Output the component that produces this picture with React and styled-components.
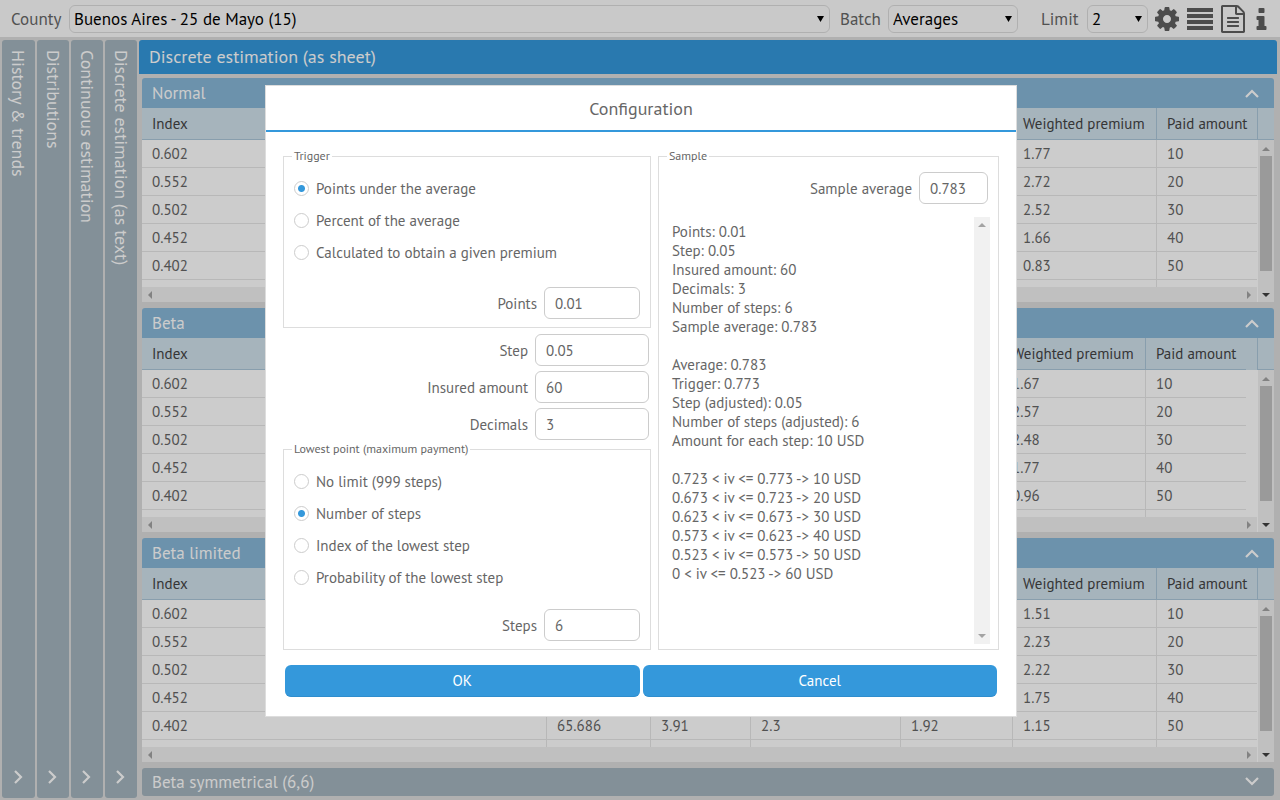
import React, { useState } from "react";
import styled, { createGlobalStyle, css } from "styled-components";

const GlobalStyle = createGlobalStyle`
  * {
    box-sizing: border-box;
  }
  body {
    margin: 0;
    background: #dddddd;
    color: #666666;
    font-family: "PT Sans", "Open Sans", "Noto Sans", sans-serif;
    font-size: 15px;
  }
  button,
  input,
  select {
    font: inherit;
    color: inherit;
  }
`;

/* ---------- toolbar ---------- */

const Page = styled.div`
  display: flex;
  flex-direction: column;
  min-height: 100vh;
`;

const Toolbar = styled.header`
  display: flex;
  align-items: center;
  height: 37px;
  padding: 0 3px 0 11px;
  background: #fcfcfc;
  font-size: 17px;
`;

const ToolField = styled.div`
  display: flex;
  align-items: center;
  gap: 7px;
  flex: ${(p) => (p.$grow ? "1" : "none")};
  margin-left: ${(p) => p.$before || 0}px;

  label {
    flex: none;
    width: ${(p) => p.$label}px;
    white-space: nowrap;
  }
`;

const SelectBox = styled.div`
  position: relative;
  flex: ${(p) => (p.$width ? "none" : "1")};
  width: ${(p) => (p.$width ? `${p.$width}px` : "auto")};

  svg {
    position: absolute;
    top: 11px;
    right: 6px;
    pointer-events: none;
  }
`;

const Select = styled.select`
  appearance: none;
  display: block;
  width: 100%;
  height: 28px;
  padding: 0 18px 0 4px;
  border: 1px solid #dddddd;
  border-radius: 6px;
  background: transparent;
  color: #000000;
`;

const Icons = styled.div`
  display: flex;
  gap: 4px;
  margin-left: 5px;
`;

const IconButton = styled.button`
  width: 28px;
  height: 28px;
  padding: 0;
  border: 0;
  background: none;
  color: #606060;

  svg {
    display: block;
  }
`;

/* ---------- accordion ---------- */

const Main = styled.main`
  display: flex;
  flex: 1;
  gap: 2px;
  padding: 3px 3px 2px 2px;
`;

const SideTab = styled.button`
  display: flex;
  flex-direction: column;
  align-items: center;
  justify-content: space-between;
  width: 32px;
  padding: 10px 0 14px;
  border: 0;
  border-radius: 3px;
  background: #a4b4be;
  color: #ffffff;
  font-size: 18px;

  &:first-child {
    width: 33px;
  }

  span {
    writing-mode: vertical-rl;
    white-space: nowrap;
  }
`;

const Sheet = styled.section`
  flex: 1;
  min-width: 0;
`;

const SheetTitle = styled.h1`
  height: 34px;
  margin: 0;
  padding-left: 10px;
  border-radius: 3px 3px 0 0;
  background: #3498db;
  color: #ffffff;
  font-size: 18px;
  font-weight: normal;
  line-height: 34px;
`;

const Panels = styled.div`
  display: flex;
  flex-direction: column;
  gap: 6px;
  padding: 4px 3px 2px;
`;

const PanelTitle = styled.button`
  display: flex;
  align-items: center;
  justify-content: space-between;
  width: 100%;
  height: ${(p) => (p.$closed ? 28 : 30)}px;
  padding: 0 15px 0 10px;
  border: 0;
  border-radius: ${(p) => (p.$closed ? "3px" : "3px 3px 0 0")};
  background: ${(p) => (p.$closed ? "#a4b4be" : "#88b7d8")};
  color: #ffffff;
  font-size: 17px;
`;

const PanelBody = styled.div`
  display: flex;
  background: #ffffff;
`;

const Grid = styled.div`
  flex: 1;
  min-width: 0;
`;

const TableClip = styled.div`
  height: 179px;
  overflow: hidden;
`;

const Table = styled.table`
  width: 100%;
  table-layout: fixed;
  border-collapse: separate;
  border-spacing: 0;

  th,
  td {
    padding: 0 0 0 10px;
    text-align: left;
    white-space: nowrap;
  }
  th {
    height: 32px;
    border-bottom: 1px solid #aac6d9;
    background: #d0e1ec;
    color: #444444;
    font-weight: normal;
  }
  td {
    height: 28px;
    border-bottom: 1px solid #e6e6e6;
  }
  th + th {
    border-left: 1px solid #aac6d9;
  }
  td + td {
    border-left: 1px solid #e6e6e6;
  }
  th.blank,
  td.blank {
    padding: 0;
    border: 0;
  }
`;

const SideBar = styled.div`
  display: flex;
  flex-direction: column;
  width: 17px;
`;

const HeadCap = styled.div`
  height: 32px;
  border-left: 1px solid #aac6d9;
  border-bottom: 1px solid #aac6d9;
  background: #d0e1ec;
`;

const bar = css`
  display: flex;
  align-items: center;
  justify-content: space-between;
  background: #f1f1f1;
`;

const HScroll = styled.div`
  ${bar}
  height: 15px;
  padding: 0 6px;
`;

const VScroll = styled.div`
  ${bar}
  flex: 1;
  flex-direction: column;
  justify-content: flex-start;
  gap: 5px;
  margin-left: 1px;
  padding: 7px 0 5px;
`;

const Thumb = styled.div`
  width: 12px;
  height: 115px;
  background: #c1c1c1;
`;

const Push = styled.div`
  margin-top: auto;
  line-height: 0;
`;

/* ---------- dialog ---------- */

const Overlay = styled.div`
  position: fixed;
  inset: 0;
  display: flex;
  align-items: center;
  justify-content: center;
  padding: 2px 0 0 2px;
  background: rgba(0, 0, 0, 0.2);
`;

const Dialog = styled.form`
  width: 752px;
  max-width: 100%;
  border: 1px solid #dddddd;
  background: #ffffff;
`;

const DialogTitle = styled.h2`
  height: 46px;
  margin: 0;
  border-bottom: 2px solid #3498db;
  font-size: 18px;
  font-weight: normal;
  line-height: 46px;
  text-align: center;
`;

const DialogBody = styled.div`
  display: grid;
  grid-template-columns: 368fr 341fr;
  gap: 7px;
  padding: 16px 17px 0;
`;

const Column = styled.div`
  display: flex;
  flex-direction: column;
  min-width: 0;
`;

const Fieldset = styled.fieldset`
  display: flex;
  flex-direction: column;
  flex: ${(p) => (p.$fill ? "1" : "none")};
  min-width: 0;
  margin: 0;
  padding: ${(p) => (p.$fill ? "8px 8px 5px" : "8px 8px 8px")};
  border: 1px solid #dddddd;
`;

const Legend = styled.legend`
  padding: 0 2px;
  font-size: 12px;
  line-height: 16px;
`;

const Choices = styled.div`
  display: flex;
  flex-direction: column;
  padding: 0 2px;
  margin-bottom: ${(p) => p.$after}px;
`;

const Choice = styled.label`
  display: flex;
  align-items: center;
  gap: 7px;
  height: 32px;
`;

const Radio = styled.input`
  appearance: none;
  width: 15px;
  height: 15px;
  margin: 0;
  border: 1px solid #cccccc;
  border-radius: 50%;

  &:checked {
    background: radial-gradient(circle, #3498db 3px, #ffffff 4px);
  }
`;

const Field = styled.label`
  display: flex;
  align-items: center;
  justify-content: flex-end;
  gap: 7px;
  padding: 0 2px;
`;

const Input = styled.input`
  width: ${(p) => p.$width}px;
  height: 32px;
  padding: 0 10px;
  border: 1px solid #cccccc;
  border-radius: 6px;
  background: #ffffff;
`;

const Loose = styled.div`
  display: flex;
  flex-direction: column;
  gap: 5px;
  padding: 6px 0 1px;
`;

const Output = styled.div`
  display: flex;
  flex: 1;
  margin-top: 13px;
`;

const Report = styled.pre`
  flex: 1;
  margin: 0;
  padding: 5px;
  font: inherit;
  line-height: 19px;
`;

const OutputScroll = styled.div`
  ${bar}
  flex-direction: column;
  width: 16px;
  padding: 6px 0;
`;

const Actions = styled.div`
  display: flex;
  gap: 3px;
  padding: 15px 19px 19px;
`;

const Action = styled.button`
  flex: 1;
  height: 32px;
  border: 0;
  border-bottom: 1px solid #2e8dcd;
  border-radius: 6px;
  background: #3498db;
  color: #ffffff;
`;

/* ---------- drawings ---------- */

const Chevron = ({ dir }) => {
  const turn = { up: 0, right: 90, down: 180 }[dir];
  return (
    <svg width="14" height="14" viewBox="0 0 14 14" aria-hidden="true">
      <path
        d="M1 11L7 5L13 11"
        transform={`rotate(${turn} 7 7)`}
        fill="none"
        stroke="#ffffff"
        strokeWidth="2.200"
      />
    </svg>
  );
};

const arrows = {
  up: [8, 4, "M0 4L4 0L8 4Z"],
  down: [8, 4, "M0 0L4 4L8 0Z"],
  left: [4, 8, "M4 0L0 4L4 8Z"],
  right: [4, 8, "M0 0L4 4L0 8Z"],
};

const Arrow = ({ dir, color = "#a3a3a3" }) => {
  const [w, h, d] = arrows[dir];
  return (
    <svg width={w} height={h} viewBox={`0 0 ${w} ${h}`} aria-hidden="true">
      <path d={d} fill={color} />
    </svg>
  );
};

const toolIcons = [
  {
    name: "Configuration",
    d: "M1152 896q0-106-75-181t-181-75-181 75-75 181 75 181 181 75 181-75 75-181zm512-109v222q0 12-8 23t-20 13l-185 28q-19 54-39 91 35 50 107 138 10 12 10 25t-9 23q-27 37-99 108t-94 71q-12 0-26-9l-138-108q-44 23-91 38-16 136-29 186-7 28-36 28h-222q-14 0-24.500-8.500t-11.500-21.500l-28-184q-49-16-90-37l-141 107q-10 9-25 9-14 0-25-11-126-114-165-168-7-10-7-23 0-12 8-23 15-21 51-66.500t54-70.500q-27-50-41-99l-183-27q-13-2-21-12.500t-8-23.500v-222q0-12 8-23t19-13l186-28q14-46 39-92-40-57-107-138-10-12-10-24 0-10 9-23 26-36 98.500-107.500t94.500-71.500q13 0 26 10l138 107q44-23 91-38 16-136 29-186 7-28 36-28h222q14 0 24.500 8.500t11.500 21.500l28 184q49 16 90 37l142-107q9-9 24-9 13 0 25 10 129 119 165 170 7 8 7 22 0 12-8 23-15 21-51 66.500t-54 70.500q26 50 41 98l183 28q13 2 21 12.500t8 23.500z",
  },
  {
    name: "Lines",
    d: "M128 448h1664v256h-1664zM128 832h1664v256h-1664zM128 1216h1664v256h-1664zM128 1600h1664v256h-1664z",
    box: "0 256 1792 1792",
  },
  {
    name: "Document",
    d: "M1596 380q28 28 48 76t20 88v1152q0 40-28 68t-68 28h-1344q-40 0-68-28t-28-68v-1600q0-40 28-68t68-28h896q40 0 88 20t76 48zm-444-244v376h376q-10-29-22-41l-313-313q-12-12-41-22zm384 1528v-1024h-416q-40 0-68-28t-28-68v-416h-768v1536h1280zm-1024-864q0-14 9-23t23-9h704q14 0 23 9t9 23v64q0 14-9 23t-23 9h-704q-14 0-23-9t-9-23v-64zm736 224q14 0 23 9t9 23v64q0 14-9 23t-23 9h-704q-14 0-23-9t-9-23v-64q0-14 9-23t23-9h704zm0 256q14 0 23 9t9 23v64q0 14-9 23t-23 9h-704q-14 0-23-9t-9-23v-64q0-14 9-23t23-9h704z",
    box: "-128 0 1792 1792",
  },
  {
    name: "Information",
    d: "M1216 1344v128q0 26-19 45t-45 19h-512q-26 0-45-19t-19-45v-128q0-26 19-45t45-19h64v-384h-64q-26 0-45-19t-19-45v-128q0-26 19-45t45-19h384q26 0 45 19t19 45v576h64q26 0 45 19t19 45zm-128-1152v192q0 26-19 45t-45 19h-256q-26 0-45-19t-19-45v-192q0-26 19-45t45-19h256q26 0 45 19t19 45z",
    box: "96 -64 1792 1792",
  },
];

/* ---------- data ---------- */

const tabs = [
  "History & trends",
  "Distributions",
  "Continuous estimation",
  "Discrete estimation (as text)",
];

const index = ["0.602", "0.552", "0.502", "0.452", "0.402"];
const paid = ["10", "20", "30", "40", "50"];

const panels = [
  { title: "Normal", premium: ["1.77", "2.72", "2.52", "1.66", "0.83"] },
  {
    title: "Beta",
    premium: ["1.67", "2.57", "2.48", "1.77", "0.96"],
    blank: true,
  },
  {
    title: "Beta limited",
    premium: ["1.51", "2.23", "2.22", "1.75", "1.15"],
    last: ["65.686", "3.91", "2.3", "1.92"],
  },
];

const report = `Points: 0.01
Step: 0.05
Insured amount: 60
Decimals: 3
Number of steps: 6
Sample average: 0.783

Average: 0.783
Trigger: 0.773
Step (adjusted): 0.05
Number of steps (adjusted): 6
Amount for each step: 10 USD

0.723 < iv <= 0.773 -> 10 USD
0.673 < iv <= 0.723 -> 20 USD
0.623 < iv <= 0.673 -> 30 USD
0.573 < iv <= 0.623 -> 40 USD
0.523 < iv <= 0.573 -> 50 USD
0 < iv <= 0.523 -> 60 USD`;

/* ---------- parts ---------- */

const ToolSelect = ({ id, label, value, width, ...rest }) => (
  <ToolField {...rest}>
    <label htmlFor={id}>{label}</label>
    <SelectBox $width={width}>
      <Select id={id} defaultValue={value}>
        <option>{value}</option>
      </Select>
      <svg width="7" height="6" viewBox="0 0 7 6" aria-hidden="true">
        <path d="M0 0H7L3.500 6Z" fill="#000000" />
      </svg>
    </SelectBox>
  </ToolField>
);

const Panel = ({ title, premium, last, blank }) => (
  <section>
    <PanelTitle>
      {title}
      <Chevron dir="up" />
    </PanelTitle>
    <PanelBody>
      <Grid>
        <TableClip>
          <Table>
            <colgroup>
              <col />
              <col width="104" />
              <col width="100" />
              <col width="150" />
              <col width="112" />
              <col width="144" />
              <col width="101" />
              {blank && <col width="11" />}
            </colgroup>
            <thead>
              <tr>
                <th>Index</th>
                <th />
                <th />
                <th />
                <th />
                <th>Weighted premium</th>
                <th>Paid amount</th>
                {blank && <th className="blank" />}
              </tr>
            </thead>
            <tbody>
              {[...index, ""].map((value, i) => (
                <tr key={i}>
                  <td>{value}</td>
                  {[0, 1, 2, 3].map((n) => (
                    <td key={n}>{i === 4 && last ? last[n] : ""}</td>
                  ))}
                  <td>{premium[i]}</td>
                  <td>{paid[i]}</td>
                  {blank && <td className="blank" />}
                </tr>
              ))}
            </tbody>
          </Table>
        </TableClip>
        <HScroll>
          <Arrow dir="left" />
          <Arrow dir="right" />
        </HScroll>
      </Grid>
      <SideBar>
        <HeadCap />
        <VScroll>
          <Arrow dir="up" />
          <Thumb />
          <Push>
            <Arrow dir="down" color="#404040" />
          </Push>
        </VScroll>
      </SideBar>
    </PanelBody>
  </section>
);

const RadioList = ({ name, options, initial, after }) => {
  const [picked, setPicked] = useState(initial);
  return (
    <Choices $after={after}>
      {options.map((text) => (
        <Choice key={text}>
          <Radio
            type="radio"
            name={name}
            checked={picked === text}
            onChange={() => setPicked(text)}
          />
          {text}
        </Choice>
      ))}
    </Choices>
  );
};

const TextField = ({ label, value, width }) => (
  <Field>
    {label}
    <Input type="text" defaultValue={value} $width={width} />
  </Field>
);

const Configuration = () => (
  <Overlay>
    <Dialog
      role="dialog"
      aria-labelledby="config-title"
      onSubmit={(e) => e.preventDefault()}
    >
      <DialogTitle id="config-title">Configuration</DialogTitle>
      <DialogBody>
        <Column>
          <Fieldset>
            <Legend>Trigger</Legend>
            <RadioList
              name="trigger"
              initial="Points under the average"
              after={19}
              options={[
                "Points under the average",
                "Percent of the average",
                "Calculated to obtain a given premium",
              ]}
            />
            <TextField label="Points" value="0.01" width={96} />
          </Fieldset>
          <Loose>
            <TextField label="Step" value="0.05" width={114} />
            <TextField label="Insured amount" value="60" width={114} />
            <TextField label="Decimals" value="3" width={114} />
          </Loose>
          <Fieldset>
            <Legend>Lowest point (maximum payment)</Legend>
            <RadioList
              name="lowest"
              initial="Number of steps"
              after={16}
              options={[
                "No limit (999 steps)",
                "Number of steps",
                "Index of the lowest step",
                "Probability of the lowest step",
              ]}
            />
            <TextField label="Steps" value="6" width={96} />
          </Fieldset>
        </Column>
        <Column>
          <Fieldset $fill>
            <Legend>Sample</Legend>
            <TextField label="Sample average" value="0.783" width={69} />
            <Output>
              <Report>{report}</Report>
              <OutputScroll>
                <Arrow dir="up" />
                <Arrow dir="down" />
              </OutputScroll>
            </Output>
          </Fieldset>
        </Column>
      </DialogBody>
      <Actions>
        <Action type="submit">OK</Action>
        <Action type="button">Cancel</Action>
      </Actions>
    </Dialog>
  </Overlay>
);

const App = () => {
  return (
    <>
      <GlobalStyle />
      <Page>
        <Toolbar>
          <ToolSelect
            id="county"
            label="County"
            value="Buenos Aires - 25 de Mayo (15)"
            $label={51}
            $grow
          />
          <ToolSelect
            id="batch"
            label="Batch"
            value="Averages"
            width={130}
            $label={41}
            $before={10}
          />
          <ToolSelect
            id="limit"
            label="Limit"
            value="2"
            width={61}
            $label={39}
            $before={23}
          />
          <Icons>
            {toolIcons.map((icon) => (
              <IconButton key={icon.name} aria-label={icon.name}>
                <svg
                  width="28"
                  height="28"
                  viewBox={icon.box || "0 0 1792 1792"}
                  fill="currentColor"
                >
                  <path d={icon.d} />
                </svg>
              </IconButton>
            ))}
          </Icons>
        </Toolbar>
        <Main>
          {tabs.map((tab) => (
            <SideTab key={tab}>
              <span>{tab}</span>
              <Chevron dir="right" />
            </SideTab>
          ))}
          <Sheet>
            <SheetTitle>Discrete estimation (as sheet)</SheetTitle>
            <Panels>
              {panels.map((panel) => (
                <Panel key={panel.title} {...panel} />
              ))}
              <PanelTitle $closed>
                Beta symmetrical (6,6)
                <Chevron dir="down" />
              </PanelTitle>
            </Panels>
          </Sheet>
        </Main>
      </Page>
      <Configuration />
    </>
  );
};

export default App;
